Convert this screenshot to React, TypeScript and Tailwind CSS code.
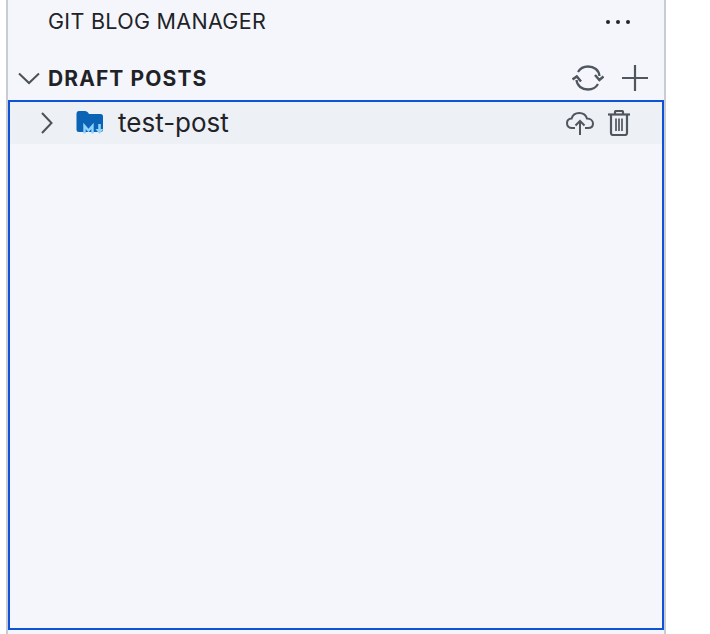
const font = { fontFamily: "Inter, sans-serif" }

function Chevron({ down }: { down?: boolean }) {
  return (
    <svg width="22" height="22" viewBox="0 0 22 22" fill="none" stroke="#4b5158" strokeWidth="2">
      {down ? <path d="M1 6.5 L11 16 L21 6.5" /> : <path d="M6 1 L15.5 11 L6 21" />}
    </svg>
  )
}

function RefreshIcon() {
  return (
    <svg width="32" height="26" viewBox="0 0 32 26" fill="none" stroke="#50565e" strokeWidth="2.3">
      <path d="M4.5 15 C5 21 10 24.5 16 24.5 C20.5 24.5 24 22.5 26 19" />
      <path d="M27.5 11 C27 5 22 1.5 16 1.5 C11.5 1.5 8 3.5 6 7" />
      <path d="M0.5 14.5 L4.8 11.5 L9 16.5" strokeWidth="2.5" />
      <path d="M23 10 L27.4 15 L31.5 11.5" strokeWidth="2.5" />
    </svg>
  )
}

function PlusIcon() {
  return (
    <svg width="26" height="26" viewBox="0 0 26 26" fill="none" stroke="#50565e" strokeWidth="2.2">
      <path d="M13 0 V26 M0 13 H26" />
    </svg>
  )
}

function CloudUploadIcon() {
  return (
    <svg width="28" height="23" viewBox="0 0 28 23" fill="none" stroke="#50565e" strokeWidth="2">
      <path d="M9 16 H6 C3 16 1 14 1 11.3 C1 8.6 3 6.8 5.6 6.6 C6.6 3 9.8 1 13.2 1 C17 1 20 3.3 21 6.6 C24.4 6.6 27 8.6 27 11.5 C27 14.2 25 16 22 16 H19" />
      <path d="M14 23 V9.5 M9.5 13.5 L14 9 L18.5 13.5" />
    </svg>
  )
}

function TrashIcon() {
  return (
    <svg width="22" height="26" viewBox="0 0 22 26" fill="none" stroke="#50565e" strokeWidth="2.2">
      <path d="M0 4.5 H22" />
      <path d="M7 4 V2 Q7 1 8 1 H14 Q15 1 15 2 V4" />
      <path d="M3 5 V23 Q3 25 5 25 H17 Q19 25 19 23 V5" />
      <path d="M8 8.5 V21 M11 8.5 V21 M14 8.5 V21" strokeWidth="1.7" />
    </svg>
  )
}

function MarkdownFolderIcon() {
  return (
    <svg width="28" height="24" viewBox="0 0 28 24">
      <path d="M0.5 3 Q0.5 0 3 0 H9 Q11 0 12 1.5 L13 3 H24.5 Q27 3 27 5.5 V18.5 Q27 21 24.5 21 H3 Q0.5 21 0.5 18.5 Z" fill="#0b63b5" />
      <path d="M8.5 22.5 V15 L12.5 19.5 L16.5 15 V22.5" fill="none" stroke="#8fd3fb" strokeWidth="2.4" />
      <path d="M23.5 13 V19" stroke="#8fd3fb" strokeWidth="2.6" />
      <path d="M19.5 18 H27.5 L23.5 23 Z" fill="#8fd3fb" />
    </svg>
  )
}

export default function App() {
  return (
    <div className="h-[634px] w-[710px] overflow-hidden bg-white" style={font}>
      <div className="ml-[6px] flex h-full w-[660px] flex-col border-x-2 border-[#c9cdd3] bg-[#f4f6fb] text-[#1f2328]">
        <div className="flex h-[44px] shrink-0 items-center justify-between pl-[40px] pr-[34px]">
          <span className="text-[21.5px] leading-none tracking-[0.3px]">GIT BLOG MANAGER</span>
          <div className="flex gap-[6px]">
            <span className="size-[4px] rounded-full bg-[#22262b]" />
            <span className="size-[4px] rounded-full bg-[#22262b]" />
            <span className="size-[4px] rounded-full bg-[#22262b]" />
          </div>
        </div>

        <div className="flex h-[56px] shrink-0 items-center justify-between pl-[10px] pr-[16px] pt-[12px]">
          <div className="flex items-center gap-[8px]">
            <Chevron down />
            <span className="text-[21px] font-bold leading-none tracking-[1.1px]">DRAFT POSTS</span>
          </div>
          <div className="flex items-center gap-[18px]">
            <RefreshIcon />
            <PlusIcon />
          </div>
        </div>

        <div className="flex-1 border-2 border-[#0f52d6]">
          <div className="flex h-[42px] items-center bg-[#edf0f4] pl-[26px] pr-[32px]">
            <Chevron />
            <span className="ml-[18px] flex">
              <MarkdownFolderIcon />
            </span>
            <span className="ml-[14px] text-[26px] leading-none">test-post</span>
            <div className="ml-auto flex items-center gap-[14px]">
              <CloudUploadIcon />
              <TrashIcon />
            </div>
          </div>
        </div>
        <div className="h-[4px] shrink-0" />
      </div>
    </div>
  )
}
